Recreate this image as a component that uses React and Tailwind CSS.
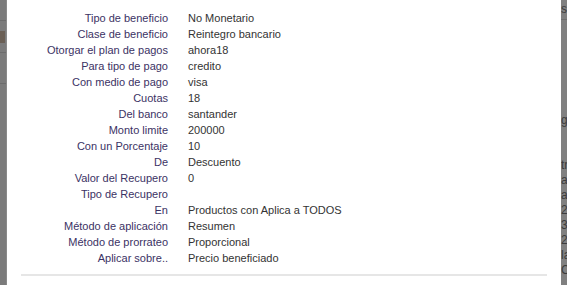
import React from "react"

const rows = [
  ["Tipo de beneficio", "No Monetario"],
  ["Clase de beneficio", "Reintegro bancario"],
  ["Otorgar el plan de pagos", "ahora18"],
  ["Para tipo de pago", "credito"],
  ["Con medio de pago", "visa"],
  ["Cuotas", "18"],
  ["Del banco", "santander"],
  ["Monto limite", "200000"],
  ["Con un Porcentaje", "10"],
  ["De", "Descuento"],
  ["Valor del Recupero", "0"],
  ["Tipo de Recupero", ""],
  ["En", "Productos con Aplica a TODOS"],
  ["Método de aplicación", "Resumen"],
  ["Método de prorrateo", "Proporcional"],
  ["Aplicar sobre..", "Precio beneficiado"],
]

const rightBits = [
  ["ge", "mt-[93px]"],
  ["tr", "mt-[30px]"],
  ["as", ""],
  ["ar", ""],
  ["20", ""],
  ["31", ""],
  ["23", ""],
  ["la", ""],
  ["C0", ""],
]

const App = () => {
  return (
    <div className="flex h-[285px] w-[567px] overflow-hidden bg-white font-['Liberation_Sans',Arial,sans-serif] text-[11px]">
      {/* backdrop, left edge */}
      <div className="flex w-[7px] shrink-0 flex-col border-r border-[#8a8a8a] bg-[#7b7b7b]">
        <div className="mt-[20px] h-px bg-[#6c6c6c]" />
        <div className="mt-[10px] h-[12px] w-[5px] bg-[#6a5f55]" />
        <div className="mt-[9px] h-px bg-[#6c6c6c]" />
        <div className="mt-[30px] h-px bg-[#6c6c6c]" />
      </div>

      <main className="flex flex-1 flex-col pt-[10px]">
        <div className="grid grid-cols-[161px_1fr] gap-x-[20px]">
          {rows.map(([label, value]) => (
            <React.Fragment key={label}>
              <div className="h-[16px] text-right leading-[16px] text-[#3b3264]">{label}</div>
              <div className="h-[16px] leading-[16px] text-[#333]">{value}</div>
            </React.Fragment>
          ))}
        </div>
        <div className="mx-[14px] mt-[8px] h-[2px] bg-[#e6e6e6]" />
      </main>

      {/* backdrop, right edge */}
      <div className="flex w-[6px] shrink-0 flex-col overflow-hidden bg-[#808080] pt-[2px] text-[12px] leading-[15px] text-[#3c3c3c]">
        <div className="h-[18px] border-b border-[#707070]">s</div>
        {rightBits.map(([t, m], i) => (
          <div key={i} className={`whitespace-nowrap ${m}`}>{t}</div>
        ))}
      </div>
    </div>
  )
}

export default App
